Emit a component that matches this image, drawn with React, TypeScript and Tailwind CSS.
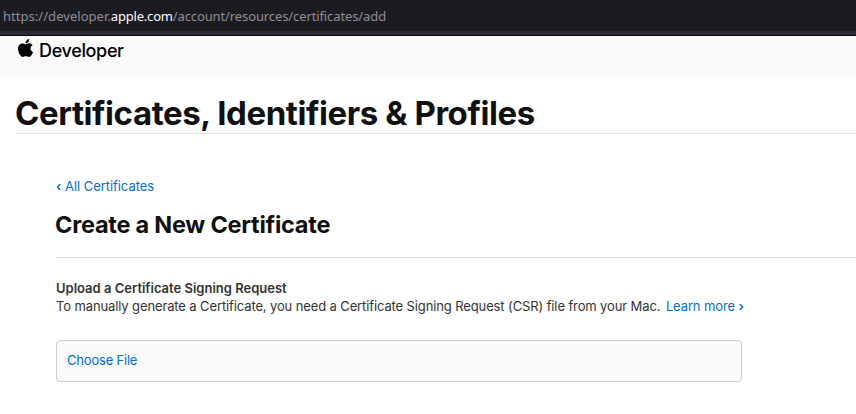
export default function App() {
  return (
    <div className="h-[414px] w-[856px] overflow-hidden bg-white font-['Inter',sans-serif] text-[#333]">
      <div className="h-9 border-b border-[#0c0c0d] bg-[#2b2a33]">
        <div className="flex h-[31px] items-start bg-[#1c1b22] pt-[6px] pl-[3px] font-['Noto_Sans',sans-serif] text-[13px] leading-[20px] whitespace-pre text-[#8f8f94]">
          <span className="tracking-[0.04px]">https://developer.</span>
          <span className="tracking-[-0.2px] text-[#fbfbfe]">apple.com</span>
          <span className="tracking-[-0.11px]">/account/resources/certificates/add</span>
        </div>
      </div>
      <header className="flex h-[41px] items-start bg-[#fafafa] pt-[3px] pl-[18px] text-black">
        <svg className="h-[18px] w-[15px] shrink-0" viewBox="4 31 376 449" preserveAspectRatio="none" fill="currentColor" aria-hidden="true">
          <path d="M318.7 268.7c-.2-36.7 16.4-64.4 50-84.8-18.8-26.9-47.2-41.7-84.7-44.6-35.5-2.8-74.3 20.7-88.5 20.7-15 0-49.4-19.7-76.4-19.7C63.3 141.2 4 184.8 4 273.5q0 39.3 14.4 81.2c12.8 36.7 59 126.7 107.2 125.2 25.2-.6 43-17.9 75.8-17.9 31.8 0 48.3 17.9 76.4 17.9 48.6-.7 90.4-82.5 102.6-119.3-65.2-30.7-61.7-90-61.7-91.9zm-56.6-164.2c27.3-32.4 24.8-61.9 24-72.5-24.1 1.4-52 16.4-67.9 34.9-17.5 19.8-27.8 44.3-25.6 71.9 26.1 2 49.9-11.4 69.5-34.3z" />
        </svg>
        <span className="mt-px ml-[6px] text-[18px] leading-[22px] font-medium tracking-[-0.35px]">Developer</span>
      </header>
      <main>
        <h1 className="ml-4 h-[57px] border-b border-[#e3e3e3] pt-[16px] text-[33px] leading-[40px] font-bold tracking-[-0.42px] whitespace-nowrap text-[#111]"><span className="-ml-px">Certificates, Identifiers &amp; Profiles</span></h1>
        <section className="ml-14 text-[13px] leading-[18px]">
          <a className="block pt-[43px] tracking-[-0.05px] text-[#0070c9]"><span className="font-semibold">‹</span> All Certificates</a>
          <h2 className="mt-[15px] h-[48px] border-b border-[#d9d9d9] text-[23.5px] leading-[30px] font-bold tracking-[-0.24px] text-[#111]"><span className="-ml-px">Create a New Certificate</span></h2>
          <p className="mt-[21px] font-semibold">Upload a Certificate Signing Request</p>
          <p className="tracking-[-0.12px] whitespace-nowrap">To manually generate a Certificate, you need a Certificate Signing Request (CSR) file from your Mac. <a className="ml-[2px] text-[#0070c9]">Learn more <span className="font-semibold">›</span></a></p>
          <div className="mt-[25px] flex h-[42px] w-[686px] items-center rounded border border-[#ccc] bg-[#f9fafa] pb-[2px] pl-[10px] tracking-[-0.2px] text-[#0070c9]">Choose File</div>
        </section>
      </main>
    </div>
  );
}
